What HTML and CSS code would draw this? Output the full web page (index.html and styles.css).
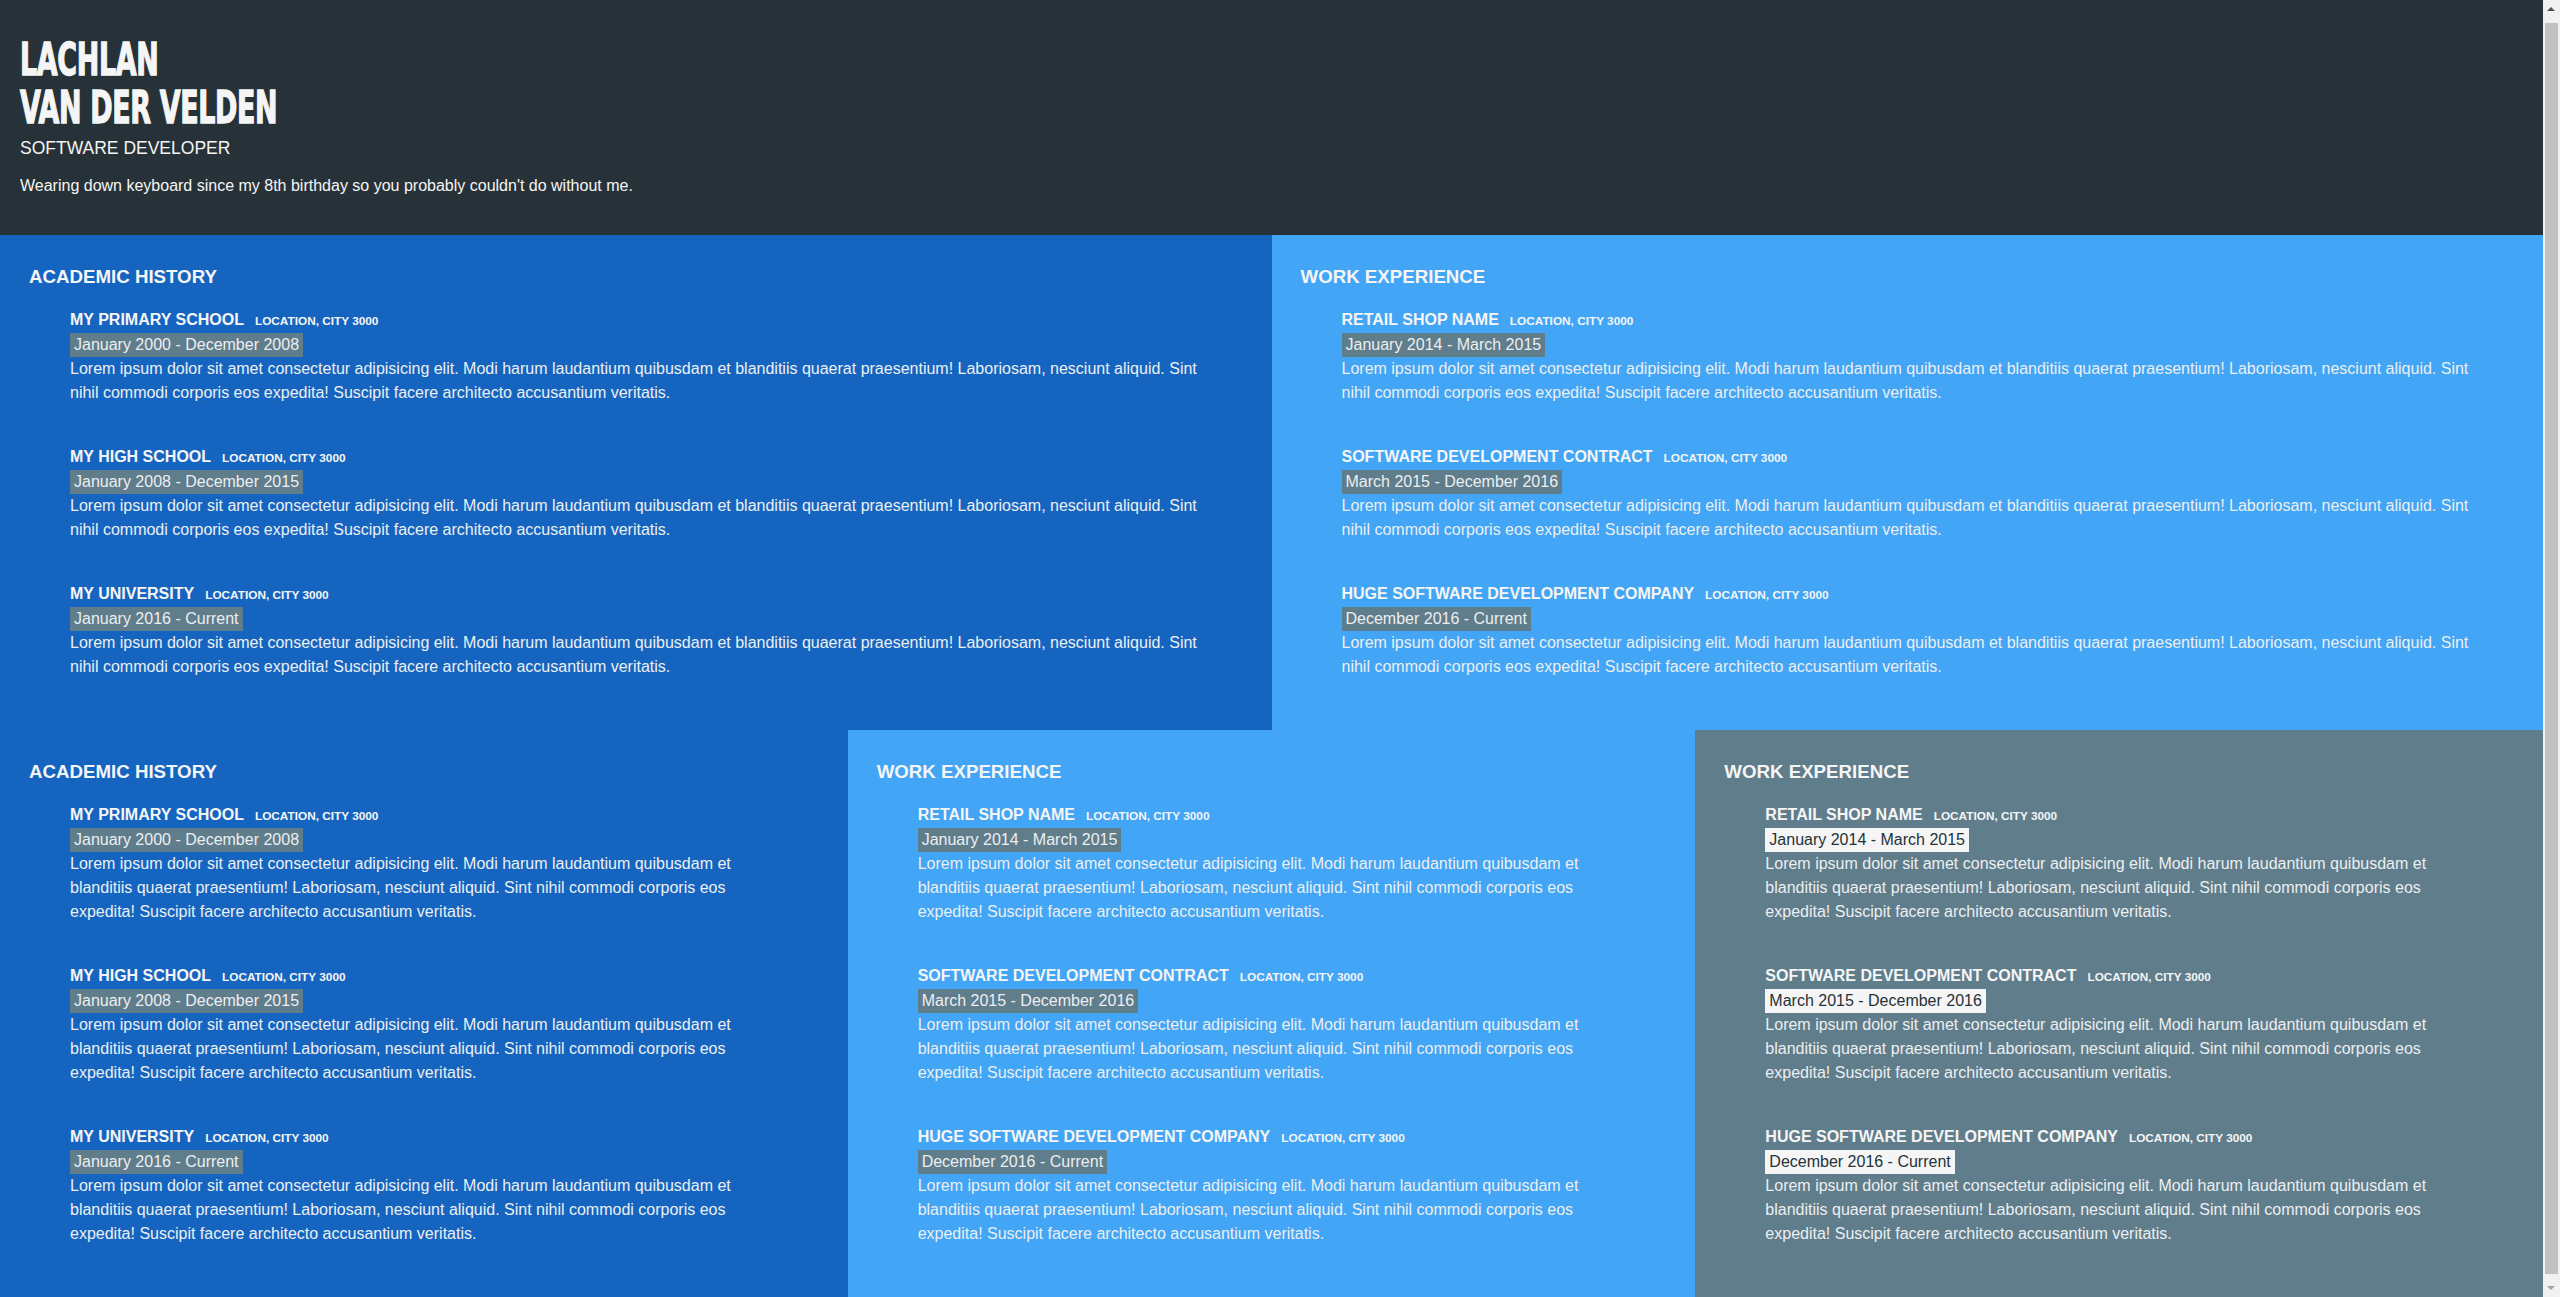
FILE: index.html
```html
<!DOCTYPE html>
<html lang="en">
<head>
<meta charset="utf-8">
<title>Lachlan van der Velden</title>
<link rel="stylesheet" href="styles.css">
</head>
<body>
<header class="hero">
  <h1 class="name">LACHLAN<br>VAN DER VELDEN</h1>
  <div class="role">SOFTWARE DEVELOPER</div>
  <p class="tagline">Wearing down keyboard since my 8th birthday so you probably couldn't do without me.</p>
</header>

<div class="row row-2">
  <section class="block dark">
    <h2>ACADEMIC HISTORY</h2>
    <div class="entry">
      <div class="entry-title">MY PRIMARY SCHOOL<span class="loc">LOCATION, CITY 3000</span></div>
      <div class="date">January 2000 - December 2008</div>
      <p>Lorem ipsum dolor sit amet consectetur adipisicing elit. Modi harum laudantium quibusdam et blanditiis quaerat praesentium! Laboriosam, nesciunt aliquid. Sint nihil commodi corporis eos expedita! Suscipit facere architecto accusantium veritatis.</p>
    </div>
    <div class="entry">
      <div class="entry-title">MY HIGH SCHOOL<span class="loc">LOCATION, CITY 3000</span></div>
      <div class="date">January 2008 - December 2015</div>
      <p>Lorem ipsum dolor sit amet consectetur adipisicing elit. Modi harum laudantium quibusdam et blanditiis quaerat praesentium! Laboriosam, nesciunt aliquid. Sint nihil commodi corporis eos expedita! Suscipit facere architecto accusantium veritatis.</p>
    </div>
    <div class="entry">
      <div class="entry-title">MY UNIVERSITY<span class="loc">LOCATION, CITY 3000</span></div>
      <div class="date">January 2016 - Current</div>
      <p>Lorem ipsum dolor sit amet consectetur adipisicing elit. Modi harum laudantium quibusdam et blanditiis quaerat praesentium! Laboriosam, nesciunt aliquid. Sint nihil commodi corporis eos expedita! Suscipit facere architecto accusantium veritatis.</p>
    </div>
  </section>
  <section class="block light">
    <h2>WORK EXPERIENCE</h2>
    <div class="entry">
      <div class="entry-title">RETAIL SHOP NAME<span class="loc">LOCATION, CITY 3000</span></div>
      <div class="date">January 2014 - March 2015</div>
      <p>Lorem ipsum dolor sit amet consectetur adipisicing elit. Modi harum laudantium quibusdam et blanditiis quaerat praesentium! Laboriosam, nesciunt aliquid. Sint nihil commodi corporis eos expedita! Suscipit facere architecto accusantium veritatis.</p>
    </div>
    <div class="entry">
      <div class="entry-title">SOFTWARE DEVELOPMENT CONTRACT<span class="loc">LOCATION, CITY 3000</span></div>
      <div class="date">March 2015 - December 2016</div>
      <p>Lorem ipsum dolor sit amet consectetur adipisicing elit. Modi harum laudantium quibusdam et blanditiis quaerat praesentium! Laboriosam, nesciunt aliquid. Sint nihil commodi corporis eos expedita! Suscipit facere architecto accusantium veritatis.</p>
    </div>
    <div class="entry">
      <div class="entry-title">HUGE SOFTWARE DEVELOPMENT COMPANY<span class="loc">LOCATION, CITY 3000</span></div>
      <div class="date">December 2016 - Current</div>
      <p>Lorem ipsum dolor sit amet consectetur adipisicing elit. Modi harum laudantium quibusdam et blanditiis quaerat praesentium! Laboriosam, nesciunt aliquid. Sint nihil commodi corporis eos expedita! Suscipit facere architecto accusantium veritatis.</p>
    </div>
  </section>
</div>

<div class="row row-3">
  <section class="block dark tall">
    <h2>ACADEMIC HISTORY</h2>
    <div class="entry">
      <div class="entry-title">MY PRIMARY SCHOOL<span class="loc">LOCATION, CITY 3000</span></div>
      <div class="date">January 2000 - December 2008</div>
      <p>Lorem ipsum dolor sit amet consectetur adipisicing elit. Modi harum laudantium quibusdam et blanditiis quaerat praesentium! Laboriosam, nesciunt aliquid. Sint nihil commodi corporis eos expedita! Suscipit facere architecto accusantium veritatis.</p>
    </div>
    <div class="entry">
      <div class="entry-title">MY HIGH SCHOOL<span class="loc">LOCATION, CITY 3000</span></div>
      <div class="date">January 2008 - December 2015</div>
      <p>Lorem ipsum dolor sit amet consectetur adipisicing elit. Modi harum laudantium quibusdam et blanditiis quaerat praesentium! Laboriosam, nesciunt aliquid. Sint nihil commodi corporis eos expedita! Suscipit facere architecto accusantium veritatis.</p>
    </div>
    <div class="entry">
      <div class="entry-title">MY UNIVERSITY<span class="loc">LOCATION, CITY 3000</span></div>
      <div class="date">January 2016 - Current</div>
      <p>Lorem ipsum dolor sit amet consectetur adipisicing elit. Modi harum laudantium quibusdam et blanditiis quaerat praesentium! Laboriosam, nesciunt aliquid. Sint nihil commodi corporis eos expedita! Suscipit facere architecto accusantium veritatis.</p>
    </div>
  </section>
  <section class="block light tall">
    <h2>WORK EXPERIENCE</h2>
    <div class="entry">
      <div class="entry-title">RETAIL SHOP NAME<span class="loc">LOCATION, CITY 3000</span></div>
      <div class="date">January 2014 - March 2015</div>
      <p>Lorem ipsum dolor sit amet consectetur adipisicing elit. Modi harum laudantium quibusdam et blanditiis quaerat praesentium! Laboriosam, nesciunt aliquid. Sint nihil commodi corporis eos expedita! Suscipit facere architecto accusantium veritatis.</p>
    </div>
    <div class="entry">
      <div class="entry-title">SOFTWARE DEVELOPMENT CONTRACT<span class="loc">LOCATION, CITY 3000</span></div>
      <div class="date">March 2015 - December 2016</div>
      <p>Lorem ipsum dolor sit amet consectetur adipisicing elit. Modi harum laudantium quibusdam et blanditiis quaerat praesentium! Laboriosam, nesciunt aliquid. Sint nihil commodi corporis eos expedita! Suscipit facere architecto accusantium veritatis.</p>
    </div>
    <div class="entry">
      <div class="entry-title">HUGE SOFTWARE DEVELOPMENT COMPANY<span class="loc">LOCATION, CITY 3000</span></div>
      <div class="date">December 2016 - Current</div>
      <p>Lorem ipsum dolor sit amet consectetur adipisicing elit. Modi harum laudantium quibusdam et blanditiis quaerat praesentium! Laboriosam, nesciunt aliquid. Sint nihil commodi corporis eos expedita! Suscipit facere architecto accusantium veritatis.</p>
    </div>
  </section>
  <section class="block slate tall">
    <h2>WORK EXPERIENCE</h2>
    <div class="entry">
      <div class="entry-title">RETAIL SHOP NAME<span class="loc">LOCATION, CITY 3000</span></div>
      <div class="date">January 2014 - March 2015</div>
      <p>Lorem ipsum dolor sit amet consectetur adipisicing elit. Modi harum laudantium quibusdam et blanditiis quaerat praesentium! Laboriosam, nesciunt aliquid. Sint nihil commodi corporis eos expedita! Suscipit facere architecto accusantium veritatis.</p>
    </div>
    <div class="entry">
      <div class="entry-title">SOFTWARE DEVELOPMENT CONTRACT<span class="loc">LOCATION, CITY 3000</span></div>
      <div class="date">March 2015 - December 2016</div>
      <p>Lorem ipsum dolor sit amet consectetur adipisicing elit. Modi harum laudantium quibusdam et blanditiis quaerat praesentium! Laboriosam, nesciunt aliquid. Sint nihil commodi corporis eos expedita! Suscipit facere architecto accusantium veritatis.</p>
    </div>
    <div class="entry">
      <div class="entry-title">HUGE SOFTWARE DEVELOPMENT COMPANY<span class="loc">LOCATION, CITY 3000</span></div>
      <div class="date">December 2016 - Current</div>
      <p>Lorem ipsum dolor sit amet consectetur adipisicing elit. Modi harum laudantium quibusdam et blanditiis quaerat praesentium! Laboriosam, nesciunt aliquid. Sint nihil commodi corporis eos expedita! Suscipit facere architecto accusantium veritatis.</p>
    </div>
  </section>
</div>

<div class="scrollbar" aria-hidden="true">
  <div class="sb-btn sb-up"></div>
  <div class="sb-thumb"></div>
  <div class="sb-btn sb-down"></div>
</div>
</body>
</html>
```

FILE: styles.css
```css
html {
  background: #f1f1f1;
}
body {
  margin: 0 17px 0 0;
  font-family: "Liberation Sans", Arial, sans-serif;
  font-size: 16px;
  color: #eceff1;
}
.hero {
  background: #263238;
  padding: 36px 20px 40px;
  color: #f5f5f5;
}
.name {
  margin: 0;
  font-family: "Liberation Sans Narrow", "DejaVu Sans Condensed", sans-serif;
  font-weight: bold;
  font-size: 44px;
  line-height: 48px;
  -webkit-text-stroke: 1.3px #f5f5f5;
  transform: scaleX(0.68);
  transform-origin: left center;
  letter-spacing: -0.5px;
}
.role {
  margin-top: 6px;
  font-size: 17.5px;
  line-height: 20px;
}
.tagline {
  margin: 18px 0 0;
  font-size: 16px;
  line-height: 19px;
}
.row {
  display: grid;
}
.row-2 {
  grid-template-columns: 1fr 1fr;
}
.row-3 {
  grid-template-columns: 1fr 1fr 1fr;
}
.block {
  padding: 31px 29px 51px;
}
.block.tall {
  padding-bottom: 60px;
}
.dark {
  background: #1565c0;
}
.light {
  background: #42a5f5;
}
.slate {
  background: #607d8b;
}
.block h2 {
  margin: 0 0 21px;
  font-size: 18.7px;
  line-height: 21px;
  font-weight: bold;
  color: #f5f5f5;
}
.entry {
  margin: 0 40px 40px 41px;
}
.entry:last-child {
  margin-bottom: 0;
}
.entry-title {
  font-weight: bold;
  font-size: 16px;
  line-height: 24px;
  height: 24px;
  color: #f5f5f5;
}
.loc {
  margin-left: 11px;
  font-size: 11.8px;
  line-height: 1;
}
.date {
  display: inline-block;
  margin-top: 1px;
  padding: 0 4px;
  line-height: 24px;
  background: #607d8b;
  color: #eceff1;
}
.slate .date {
  background: #f5f5f5;
  color: #263238;
}
.entry p {
  margin: 0;
  line-height: 24px;
}

/* window scrollbar as captured in the screenshot */
.scrollbar {
  position: fixed;
  top: 0;
  right: 0;
  bottom: 0;
  width: 17px;
  background: #f1f1f1;
  display: flex;
  flex-direction: column;
}
.sb-btn {
  height: 23px;
  flex: none;
  position: relative;
}
.sb-btn::after {
  content: "";
  position: absolute;
  left: 4px;
  border-left: 4.5px solid transparent;
  border-right: 4.5px solid transparent;
}
.sb-up::after {
  top: 7px;
  border-bottom: 4px solid #505050;
}
.sb-down::after {
  bottom: 7px;
  border-top: 4px solid #a3a3a3;
}
.sb-thumb {
  flex: 1;
  margin: 0 2px;
  background: #c1c1c1;
}
```
